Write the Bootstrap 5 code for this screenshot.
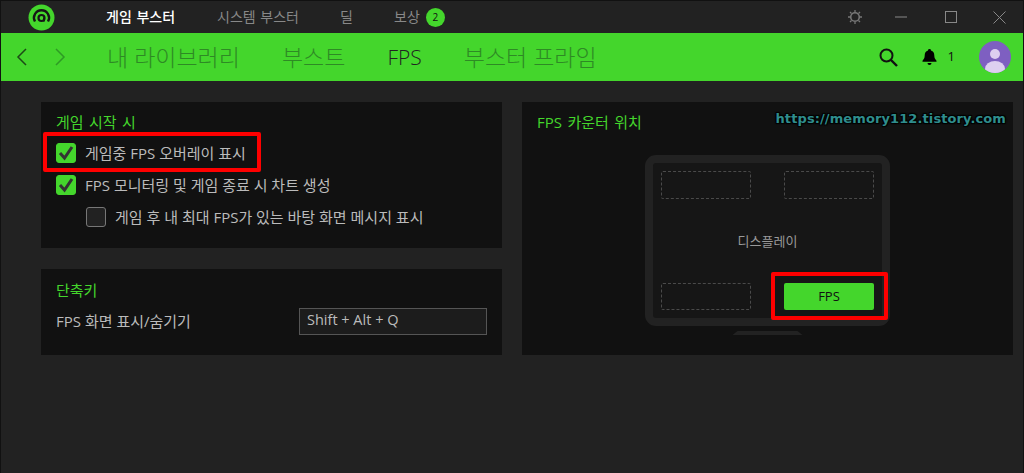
<!DOCTYPE html>
<html lang="ko">
<head>
<meta charset="utf-8">
<title>FPS</title>
<link href="https://cdn.jsdelivr.net/npm/bootstrap@5.3.0/dist/css/bootstrap.min.css" rel="stylesheet">
<style>
html,body{height:100%;}
body{background:#222;color:#bbb;font-family:"Open Sans","Noto Sans CJK KR",sans-serif;font-size:15px;overflow:hidden;}
.app-win{height:473px;width:1024px;border:1px solid #111;border-width:1px 1px 0 1px;display:flex;flex-direction:column;}
.title-row{height:32px;flex:none;}
.logo-spot{width:105px;padding-left:27px;}
.top-tab{font-size:14px;color:#888;line-height:32px;white-space:nowrap;word-spacing:1px;}
.top-tab.on{color:#fff;font-weight:500;}
.tab-a{width:111px}.tab-b{width:123px}.tab-c{width:54px}
.count-pill{width:19px;height:19px;border-radius:50%;background:#44d62c;color:#111;font-size:10px;margin-left:6px;}
.win-ctl{width:48px;height:32px;}
.green-bar{height:48px;flex:none;background:#44d62c;}
.arrow-zone{width:106px;padding-left:15px;gap:28px;}
.sub-tab{font-size:23px;font-weight:300;color:#2e8a25;margin-right:42px;white-space:nowrap;line-height:48px;}
.sub-tab.on{color:#222;font-size:21px;}
.green-right{margin-left:auto;padding-right:12px;}
.bell-num{font-size:13px;color:#111;margin-left:11px;}
.main-zone{flex:1;padding:21px 10px 0 40px;gap:20px;}
.left-col{width:461px;gap:21px;}
.panel-box{background:#111;color:#bbb;position:relative;}
.panel-a{height:146px;padding:10px 15px;}
.panel-b{height:86px;padding:11px 15px;}
.panel-c{width:491px;height:253px;padding:10px 15px;}
.panel-head{color:#44d62c;font-size:15px;line-height:20px;word-spacing:1.500px;}
.head-gap{margin-bottom:5px;}
.opt-row{display:flex;align-items:center;gap:9px;height:32px;font-size:15px;}
.opt-row.sub-opt{margin-left:30px;}
.opt-row .form-check-input{width:20px;height:20px;margin:0;flex:none;background-color:#222;border:1px solid #777;border-radius:3px;}
.opt-row .form-check-input:checked{background-color:#44d62c;border-color:#44d62c;background-size:20px 20px;background-image:url("data:image/svg+xml,%3csvg xmlns='http://www.w3.org/2000/svg' viewBox='0 0 20 20'%3e%3cpath fill='none' stroke='%23333' stroke-width='3' d='M4 10l4.500 5 7.500-11'/%3e%3c/svg%3e");}
.red-mark{position:absolute;border:4px solid #f00;border-radius:2px;pointer-events:none;}
.mark-one{left:2px;top:30px;width:218px;height:40px;}
.mark-two{left:249px;top:170px;width:117px;height:48px;}
.key-row{margin-top:8px;}
.key-box{width:188px;height:27px;background:#1c1c1c;border:1px solid #555;color:#bbb;padding:0 7px;font-size:14.500px;line-height:22px;}
.url-mark{position:absolute;right:7px;top:7px;font-family:"DejaVu Sans",sans-serif;font-weight:700;font-size:13px;color:#2f8d8d;letter-spacing:.1px;text-shadow:1px 1px 1px #000,-1px -1px 1px #000,1px -1px 1px #000,-1px 1px 1px #000;white-space:nowrap;}
.screen-wrap{margin:23px 0 0 108px;width:245px;}
.screen-frame{height:171px;border:8px solid #222;border-radius:11px;background:#161616;padding:8px;display:grid;grid-template-columns:90px 90px;justify-content:space-between;grid-template-rows:28px 1fr 27px;}
.slot-empty{border:1px dashed #4a4a4a;border-radius:2px;}
.slot-on{background:#44d62c;color:#111;border-radius:2px;font-size:13px;display:flex;align-items:center;justify-content:center;}
.screen-label{grid-column:1/3;align-self:center;text-align:center;color:#999;font-size:13px;padding-top:1px;}
.screen-stand{width:70px;height:4px;margin:5px auto 0;background:#222;clip-path:polygon(5px 0,65px 0,100% 100%,0 100%);}
</style>
</head>
<body>
<div class="app-win">
  <div class="title-row d-flex align-items-center">
    <div class="logo-spot d-flex align-items-center">
      <svg width="27" height="27" viewBox="0 0 27 27"><circle cx="13.500" cy="13.500" r="13" fill="#44d62c"/><path d="M7 17.500a7.500 7.500 0 1 1 13 0" fill="none" stroke="#161616" stroke-width="2.400"/><circle cx="13.500" cy="14" r="3" fill="none" stroke="#161616" stroke-width="2.200"/><path d="M16 13.500v4" stroke="#161616" stroke-width="1.800"/></svg>
    </div>
    <div class="top-tab on tab-a">게임 부스터</div>
    <div class="top-tab tab-b">시스템 부스터</div>
    <div class="top-tab tab-c">딜</div>
    <div class="top-tab d-flex align-items-center">보상<span class="count-pill d-flex align-items-center justify-content-center">2</span></div>
    <div class="ms-auto d-flex align-items-center">
      <div class="win-ctl d-flex align-items-center justify-content-center">
        <svg width="14" height="14" viewBox="0 0 14 14" fill="none" stroke="#777"><circle cx="7" cy="7" r="4.300" stroke-width="1.600"/><path d="M7 0v2M7 12v2M0 7h2M12 7h2M2 2l1.500 1.500M10.500 10.500L12 12M12 2l-1.500 1.500M3.500 10.500L2 12" stroke-width="1.300"/></svg>
      </div>
      <div class="win-ctl d-flex align-items-center justify-content-center pe-1">
        <svg width="12" height="2" viewBox="0 0 12 2"><path d="M0 1h12" stroke="#888"/></svg>
      </div>
      <div class="win-ctl d-flex align-items-center justify-content-center">
        <svg width="12" height="12" viewBox="0 0 12 12"><rect x=".5" y=".5" width="11" height="11" fill="none" stroke="#888"/></svg>
      </div>
      <div class="win-ctl d-flex align-items-center justify-content-center">
        <svg width="13" height="13" viewBox="0 0 13 13"><path d="M.5.500l12 12M12.500.500l-12 12" stroke="#888" fill="none"/></svg>
      </div>
    </div>
  </div>
  <div class="green-bar d-flex align-items-center">
    <div class="arrow-zone d-flex align-items-center">
      <svg width="11" height="18" viewBox="0 0 11 18"><path d="M10 1L2 9l8 8" fill="none" stroke="#1d4a17" stroke-width="1.500"/></svg>
      <svg width="11" height="18" viewBox="0 0 11 18"><path d="M1 1l8 8-8 8" fill="none" stroke="#2e9a25" stroke-width="1.500"/></svg>
    </div>
    <div class="sub-tab">내 라이브러리</div>
    <div class="sub-tab">부스트</div>
    <div class="sub-tab on">FPS</div>
    <div class="sub-tab">부스터 프라임</div>
    <div class="green-right d-flex align-items-center">
      <svg width="19" height="19" viewBox="0 0 19 19" fill="none" stroke="#111"><circle cx="7.500" cy="7.500" r="6" stroke-width="2"/><path d="M12 12l6 6" stroke-width="2.400"/></svg>
      <svg class="ms-4" width="15" height="16" viewBox="0 0 15 16" fill="#000"><path d="M7.500 0a1.500 1.500 0 0 1 1.500 1.600c2.300.7 3.300 2.600 3.300 5 0 2.500.9 3.600 2.200 5.100v1H.5v-1c1.300-1.500 2.200-2.600 2.200-5.100 0-2.400 1-4.300 3.300-5A1.500 1.500 0 0 1 7.500 0z"/><path d="M5.500 14h4a2 2 0 0 1-4 0z"/></svg>
      <span class="bell-num">1</span>
      <svg class="ms-4" width="32" height="32" viewBox="0 0 32 32"><defs><clipPath id="avatarClip"><circle cx="16" cy="16" r="16"/></clipPath></defs><circle cx="16" cy="16" r="16" fill="#7e5fc1"/><g clip-path="url(#avatarClip)" fill="#ddcff0"><circle cx="16" cy="13" r="5"/><ellipse cx="16" cy="28" rx="10" ry="8"/></g></svg>
    </div>
  </div>
  <div class="main-zone d-flex align-items-start">
    <div class="left-col d-flex flex-column">
      <div class="panel-box panel-a">
        <div class="panel-head head-gap">게임 시작 시</div>
        <label class="opt-row"><input class="form-check-input" type="checkbox" checked><span>게임중 FPS 오버레이 표시</span></label>
        <label class="opt-row"><input class="form-check-input" type="checkbox" checked><span>FPS 모니터링 및 게임 종료 시 차트 생성</span></label>
        <label class="opt-row sub-opt"><input class="form-check-input" type="checkbox"><span>게임 후 내 최대 FPS가 있는 바탕 화면 메시지 표시</span></label>
        <div class="red-mark mark-one"></div>
      </div>
      <div class="panel-box panel-b">
        <div class="panel-head">단축키</div>
        <div class="key-row d-flex align-items-center justify-content-between">
          <span>FPS 화면 표시/숨기기</span>
          <div class="key-box">Shift + Alt + Q</div>
        </div>
      </div>
    </div>
    <div class="panel-box panel-c">
      <div class="panel-head">FPS 카운터 위치</div>
      <div class="url-mark">https://memory112.tistory.com</div>
      <div class="screen-wrap">
        <div class="screen-frame">
          <div class="slot-empty"></div>
          <div class="slot-empty"></div>
          <div class="screen-label">디스플레이</div>
          <div class="slot-empty"></div>
          <div class="slot-on">FPS</div>
        </div>
        <div class="screen-stand"></div>
      </div>
      <div class="red-mark mark-two"></div>
    </div>
  </div>
</div>
<script src="https://cdn.jsdelivr.net/npm/bootstrap@5.3.0/dist/js/bootstrap.bundle.min.js"></script>
</body>
</html>
